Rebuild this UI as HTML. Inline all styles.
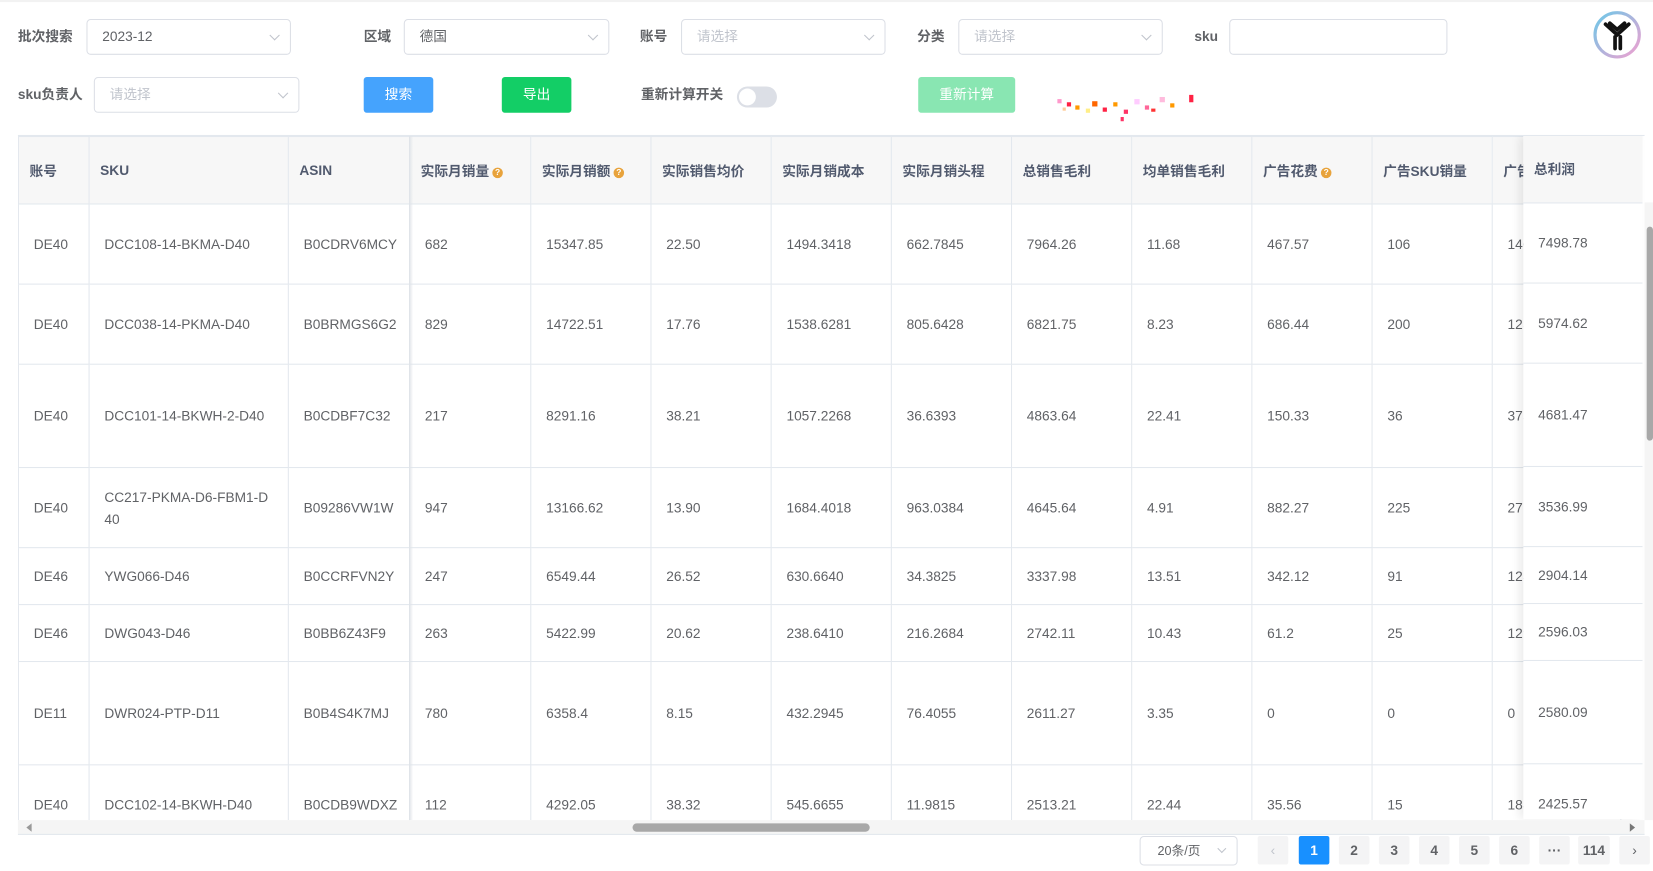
<!DOCTYPE html>
<html><head><meta charset="utf-8">
<style>
*{box-sizing:border-box;margin:0;padding:0}
html,body{width:1653px;height:870px;overflow:hidden;background:#fff}
#w{position:absolute;left:0;top:0;width:1568px;height:826px;transform:scale(1.05421);transform-origin:0 0;font-family:"Liberation Sans","Noto Sans CJK SC",sans-serif;color:#606266;font-size:13px}
.a{position:absolute}
.lbl{position:absolute;font-weight:bold;font-size:13px;color:#606266;line-height:34px}
.inp{position:absolute;height:34px;border:1px solid #dcdfe6;border-radius:4px;padding-left:14px;line-height:32px;font-size:13px;color:#606266}
.inp.ph{color:#c0c4cc}
.inp .ar{position:absolute;right:11px;top:11px;width:7px;height:7px;border-right:1px solid #c0c4cc;border-bottom:1px solid #c0c4cc;transform:rotate(45deg)}
.btn{position:absolute;height:34px;border-radius:3px;color:#fff;text-align:center;line-height:34px;font-size:13px}
table{border-collapse:collapse;table-layout:fixed;position:absolute;left:0;top:0}
td,th{border:1px solid #e3e8ee;text-align:left;font-size:13px;overflow:hidden;white-space:nowrap}
th{background:#f7f7f7;color:#515a6e;font-weight:bold;height:64px;padding-left:10px}
td{padding-left:14px;color:#606266}
.q{display:inline-block;width:10px;height:10px;border-radius:50%;background:#e8a33c;color:#fff;font-size:8px;line-height:10px;text-align:center;vertical-align:1px;margin-left:3px}
.pg{position:absolute;top:793px;width:29px;height:27px;background:#f4f4f5;border-radius:2px;text-align:center;line-height:27px;font-weight:bold;font-size:13px;color:#606266}
.fr{height:76px;border-bottom:1px solid #e3e8ee;padding-left:14px}
</style></head><body><div id="w">
<div class="a" style="left:0;top:0;width:1568px;height:2px;background:#f2f2f2"></div>
<div class="lbl" style="left:17px;top:18px">批次搜索</div>
<div class="inp" style="left:82px;top:18px;width:194px">2023-12<span class="ar"></span></div>
<div class="lbl" style="left:345px;top:18px">区域</div>
<div class="inp" style="left:383px;top:18px;width:195px">德国<span class="ar"></span></div>
<div class="lbl" style="left:607px;top:18px">账号</div>
<div class="inp ph" style="left:646px;top:18px;width:194px">请选择<span class="ar"></span></div>
<div class="lbl" style="left:870px;top:18px">分类</div>
<div class="inp ph" style="left:909px;top:18px;width:194px">请选择<span class="ar"></span></div>
<div class="lbl" style="left:1133px;top:18px">sku</div>
<div class="inp" style="left:1166px;top:18px;width:207px"></div>
<svg class="a" style="left:1510px;top:9px" width="48" height="48" viewBox="0 0 48 48"><defs><linearGradient id="g" x1="0" y1="0" x2="1" y2="1"><stop offset="0" stop-color="#6cc8e8"/><stop offset="1" stop-color="#f0a0d0"/></linearGradient></defs><circle cx="24" cy="24" r="21" fill="#fff" stroke="url(#g)" stroke-width="3"/><path d="M13 14 L24 24 L35 14 M17 13 L24 19 L31 13 M22 26 V37 M27 26 V37" stroke="#111" stroke-width="3.5" fill="none" stroke-linecap="round"/></svg>
<div class="lbl" style="left:17px;top:73px">sku负责人</div>
<div class="inp ph" style="left:89px;top:73px;width:195px">请选择<span class="ar"></span></div>
<div class="btn" style="left:345px;top:73px;width:66px;background:#45a3fd">搜索</div>
<div class="btn" style="left:476px;top:73px;width:66px;background:#13ce66">导出</div>
<div class="lbl" style="left:608px;top:73px">重新计算开关</div>
<div class="a" style="left:699px;top:82px;width:38px;height:20px;border-radius:10px;background:#dcdfe6"><div class="a" style="left:2px;top:2px;width:16px;height:16px;border-radius:50%;background:#fff"></div></div>
<div class="btn" style="left:871px;top:73px;width:92px;background:#89e6b2">重新计算</div>
<svg class="a" style="left:1000px;top:88px" width="146" height="28"><g fill="#f24"><rect x="3" y="6" width="4" height="4" fill="#f9c"/><rect x="12" y="9" width="4" height="4"/><rect x="20" y="12" width="4" height="4" fill="#f90"/><rect x="36" y="8" width="5" height="5" fill="#f60"/><rect x="46" y="14" width="4" height="4"/><rect x="56" y="9" width="4" height="4" fill="#f90"/><rect x="66" y="16" width="4" height="4" fill="#f36"/><rect x="76" y="6" width="5" height="5" fill="#fcf"/><rect x="86" y="12" width="4" height="4" fill="#f69"/><rect x="100" y="4" width="5" height="5" fill="#fbd"/><rect x="110" y="10" width="4" height="4" fill="#f90"/><rect x="128" y="2" width="4" height="7"/><rect x="63" y="23" width="3" height="4" fill="#f36"/><rect x="30" y="15" width="4" height="4" fill="#fe8"/><rect x="8" y="14" width="3" height="3" fill="#fc9"/><rect x="92" y="15" width="4" height="3" fill="#f33"/></g></svg>

<div class="a" style="left:17px;top:128px;width:1543px;height:650px;overflow:hidden;border-top:1px solid #e3e8ee">
<table style="width:1520px">
<colgroup><col style="width:67px"><col style="width:189px"><col style="width:115px"><col style="width:115px"><col style="width:114px"><col style="width:114px"><col style="width:114px"><col style="width:114px"><col style="width:114px"><col style="width:114px"><col style="width:114px"><col style="width:114px"><col style="width:122px"></colgroup>
<tr><th>账号</th><th>SKU</th><th>ASIN</th><th>实际月销量<span class="q">?</span></th><th>实际月销额<span class="q">?</span></th><th>实际销售均价</th><th>实际月销成本</th><th>实际月销头程</th><th>总销售毛利</th><th>均单销售毛利</th><th>广告花费<span class="q">?</span></th><th>广告SKU销量</th><th>广告销量</th></tr>
<tr style="height:76px"><td>DE40</td><td>DCC108-14-BKMA-D40</td><td>B0CDRV6MCY</td><td>682</td><td>15347.85</td><td>22.50</td><td>1494.3418</td><td>662.7845</td><td>7964.26</td><td>11.68</td><td>467.57</td><td>106</td><td>140</td></tr>
<tr style="height:76px"><td>DE40</td><td>DCC038-14-PKMA-D40</td><td>B0BRMGS6G2</td><td>829</td><td>14722.51</td><td>17.76</td><td>1538.6281</td><td>805.6428</td><td>6821.75</td><td>8.23</td><td>686.44</td><td>200</td><td>125</td></tr>
<tr style="height:98px"><td>DE40</td><td>DCC101-14-BKWH-2-D40</td><td>B0CDBF7C32</td><td>217</td><td>8291.16</td><td>38.21</td><td>1057.2268</td><td>36.6393</td><td>4863.64</td><td>22.41</td><td>150.33</td><td>36</td><td>375</td></tr>
<tr style="height:76px"><td>DE40</td><td style="white-space:normal;line-height:21px">CC217-PKMA-D6-FBM1-D<br>40</td><td>B09286VW1W</td><td>947</td><td>13166.62</td><td>13.90</td><td>1684.4018</td><td>963.0384</td><td>4645.64</td><td>4.91</td><td>882.27</td><td>225</td><td>271</td></tr>
<tr style="height:54px"><td>DE46</td><td>YWG066-D46</td><td>B0CCRFVN2Y</td><td>247</td><td>6549.44</td><td>26.52</td><td>630.6640</td><td>34.3825</td><td>3337.98</td><td>13.51</td><td>342.12</td><td>91</td><td>123</td></tr>
<tr style="height:54px"><td>DE46</td><td>DWG043-D46</td><td>B0BB6Z43F9</td><td>263</td><td>5422.99</td><td>20.62</td><td>238.6410</td><td>216.2684</td><td>2742.11</td><td>10.43</td><td>61.2</td><td>25</td><td>129</td></tr>
<tr style="height:98px"><td>DE11</td><td>DWR024-PTP-D11</td><td>B0B4S4K7MJ</td><td>780</td><td>6358.4</td><td>8.15</td><td>432.2945</td><td>76.4055</td><td>2611.27</td><td>3.35</td><td>0</td><td>0</td><td>0</td></tr>
<tr style="height:76px"><td>DE40</td><td>DCC102-14-BKWH-D40</td><td>B0CDB9WDXZ</td><td>112</td><td>4292.05</td><td>38.32</td><td>545.6655</td><td>11.9815</td><td>2513.21</td><td>22.44</td><td>35.56</td><td>15</td><td>188</td></tr>
</table>
<div class="a" style="left:371px;top:0;width:4px;height:650px;background:linear-gradient(90deg,#dfe3e8,#fff0)"></div>
<div class="a" style="left:1428px;top:0;width:113px;height:648px;background:#fff;box-shadow:-4px 0 8px rgba(0,0,0,.08)">
<div style="height:64px;background:#f7f7f7;border-bottom:1px solid #e3e8ee;font-weight:bold;color:#515a6e;line-height:64px;padding-left:10px">总利润</div>
<div class="fr" style="line-height:76px">7498.78</div>
<div class="fr" style="line-height:76px">5974.62</div>
<div class="fr" style="height:98px;line-height:98px">4681.47</div>
<div class="fr" style="line-height:76px">3536.99</div>
<div class="fr" style="height:54px;line-height:54px">2904.14</div>
<div class="fr" style="height:54px;line-height:54px">2596.03</div>
<div class="fr" style="height:98px;line-height:98px">2580.09</div>
<div class="fr" style="line-height:76px;border-bottom:0">2425.57</div>
</div>
</div>
<div class="a" style="left:1560px;top:192px;width:8px;height:586px;background:#f5f5f5"></div>
<div class="a" style="left:1562px;top:215px;width:6px;height:203px;background:#a8a8a8;border-radius:3px"></div>
<div class="a" style="left:17px;top:778px;width:1543px;height:14px;background:#f5f5f5;border-bottom:1px solid #e3e8ee"></div>
<div class="a" style="left:600px;top:781px;width:225px;height:8px;background:#a8a8a8;border-radius:4px"></div>
<div class="a" style="left:25px;top:781px;width:0;height:0;border:4px solid transparent;border-right:5px solid #999;border-left:0"></div>
<div class="a" style="left:1546px;top:781px;width:0;height:0;border:4px solid transparent;border-left:5px solid #777;border-right:0"></div>
<div class="inp" style="left:1081px;top:793px;width:93px;height:28px;line-height:26px;padding-left:16px;font-size:12px">20条/页<span class="ar" style="top:8px;width:6px;height:6px"></span></div>
<div class="pg" style="left:1193px;color:#c0c4cc;font-weight:normal">‹</div>
<div class="pg" style="left:1232px;background:#1890ff;color:#fff">1</div>
<div class="pg" style="left:1270px">2</div>
<div class="pg" style="left:1308px">3</div>
<div class="pg" style="left:1346px">4</div>
<div class="pg" style="left:1384px">5</div>
<div class="pg" style="left:1422px">6</div>
<div class="pg" style="left:1460px">···</div>
<div class="pg" style="left:1497px;width:30px">114</div>
<div class="pg" style="left:1536px;font-weight:normal">›</div>
</div></body></html>
